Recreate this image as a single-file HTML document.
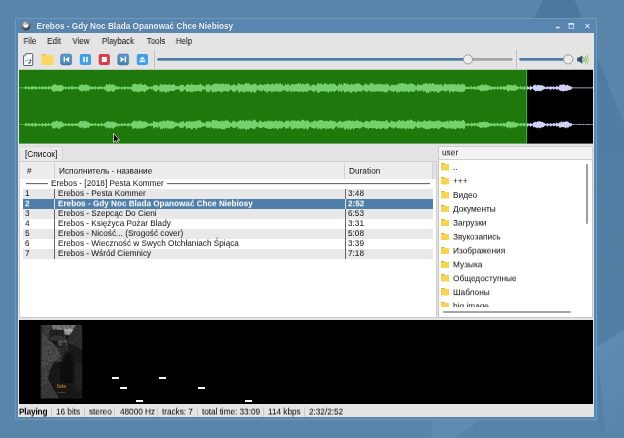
<!DOCTYPE html>
<html><head><meta charset="utf-8">
<style>
*{box-sizing:border-box;margin:0;padding:0}
html,body{width:624px;height:438px;overflow:hidden;background:#5985ab;font-family:"Liberation Sans",sans-serif;font-size:8.2px;color:#0c0c0c}
.abs{position:absolute}
i{display:block;position:absolute;font-style:normal}
#bg{position:absolute;left:0;top:0}
#win{position:absolute;left:15px;top:18px;width:582px;height:402px;background:#5886b0;border:1px solid #7098bd}
#title{position:absolute;left:36px;top:18px;transform:translate(.6px,.6px);text-shadow:0 .7px .8px rgba(25,45,75,.55);height:15px;line-height:15px;color:#eef3f8;font-weight:bold;font-size:8.2px;letter-spacing:.02px;white-space:nowrap}
#body{position:absolute;left:18px;top:33px;width:576px;height:384px;background:#e4e4e4}
.menu{position:absolute;top:35px;font-size:8.3px;line-height:12px;color:#0a0a0a;white-space:nowrap;transform:translateX(-50%) scaleX(.955)}
#wave{position:absolute;left:19px;top:69.7px;width:574px;height:73.8px;background:#000;overflow:hidden}
#played{position:absolute;left:0;top:0;width:508px;height:74px;background:#1e780b}
#tab{position:absolute;left:19px;top:146.3px;width:43.5px;height:15.5px;background:#e9e9e9;border:1px solid #d6d6d6;border-bottom:none;border-radius:2px 2px 0 0;line-height:14.4px;text-align:center;font-size:8.3px;white-space:nowrap}
#pane{position:absolute;left:19px;top:161px;width:418px;height:156.6px;background:#fff;border:1px solid #cfcfcf}
#hdr{position:absolute;left:20px;top:162px;width:416px;height:17.3px;background:#ededed}
.ht{position:absolute;top:162px;transform-origin:0 0;transform:translateY(.37px) scaleY(.94);line-height:18px;white-space:nowrap;font-size:8.3px}
.hs{position:absolute;top:162.5px;width:1px;height:16.5px;background:#d2d2d2}
.row{position:absolute;left:23px;width:409.5px;height:10px;line-height:10px;white-space:nowrap;font-size:8.3px}
.row.odd{background:#e8e8e8}
.row.sel{background:#4f7fa8;color:#fff;font-weight:bold;font-size:8.23px}
.rt{position:absolute;line-height:10px;font-size:8.22px;white-space:nowrap;will-change:transform;transform-origin:0 0;transform:translateY(1.4px) scaleY(.94)}
.rs{color:#fff;font-weight:bold;font-size:8.16px;transform:translateY(1.65px) scaleY(.94)}
.row .v1{left:31px;top:0;width:1px;height:100%;background:#666}
.row .v2{left:321.5px;top:0;width:1px;height:100%;background:#666}
.row.sel .v1,.row.sel .v2{background:#dfe8f0}
#grp{position:absolute;left:51px;top:178px;transform-origin:0 0;transform:translateY(1.35px) scaleY(.94);line-height:10px;white-space:nowrap;font-size:8.22px}
.gl{position:absolute;top:183.3px;height:.8px;background:#555}
#ubox{position:absolute;left:438px;top:146px;width:155px;height:14px;background:#f2f2f2;border:1px solid #cfcfcf;line-height:11px;padding-left:3px;font-size:8.2px}
#browser{position:absolute;left:438px;top:160px;width:155px;height:157.5px;background:#fff;border:1px solid #c4c4c4;border-top:none}
#blist{position:absolute;left:438px;top:161px;width:146px;height:146px;overflow:hidden}
.fo{position:absolute;left:2.9px}
.ft{position:absolute;left:15px;line-height:14px;font-size:8.3px;white-space:nowrap;will-change:transform;transform-origin:0 0}
#vis{position:absolute;left:19px;top:320px;width:574px;height:83.5px;background:#000}
.bar{position:absolute;width:7px;height:2px;background:#f4f4f4}
#status{position:absolute;left:18px;top:403px;width:576px;height:14px;white-space:nowrap}
.st{position:absolute;top:3px;line-height:12px;font-size:8.3px;letter-spacing:-.06px;color:#000;transform-origin:0 0;transform:translateY(-.3px) scaleY(.98)}
.ss{top:4px;width:1px;height:9.5px;background:#c8c8c8}
#title,.menu,.ht,.row span,#grp,#utx,.st,#ttx{will-change:transform}
#tab span,#ubox span{display:inline-block}
#utx{position:absolute;left:441.7px;top:146px;line-height:12px;font-size:8.3px;transform-origin:0 0;transform:translateY(.84px) scaleY(.94)}
#ttx{position:absolute;left:25px;top:146px;line-height:14px;font-size:8.3px;white-space:nowrap;transform:translateY(.75px)}
</style></head><body>
<svg id="bg" width="624" height="438"><defs><linearGradient id="lg1" x1="0" y1="0" x2=".3" y2="1"><stop offset="0" stop-color="#618db3"/><stop offset="1" stop-color="#5985ab"/></linearGradient><linearGradient id="lg2" x1="0" y1="0" x2="0" y2="1"><stop offset="0" stop-color="#4b779e"/><stop offset=".25" stop-color="#517da4"/><stop offset="1" stop-color="#5480a6"/></linearGradient></defs>
<polygon points="543,0 574.5,0 624,124 624,330 597,347 606,438 456,438 482,419 534,419 534,18" fill="url(#lg2)"/>
<polygon points="597,347 624,330 624,438 606,438" fill="url(#lg1)"/>
<polygon points="433,419 482,419 456,438 431,438" fill="#5f8bb1"/>
<polygon points="0,419 433,419 431,438 0,438" fill="#5985ab"/>
<polygon points="482,419 597,419 606,438 456,438" fill="#5783a9"/>
</svg>
<div id="win"></div>
<div id="title">Erebos - Gdy Noc Blada Opanować Chce Niebiosy</div>
<svg class="abs" style="left:553px;top:20px" width="40" height="12" viewBox="0 0 40 12"><rect x="3.1" y="6.8" width="3.5" height="1.5" fill="#e3ebf3"/><rect x="16" y="3.6" width="4.7" height="4.7" fill="none" stroke="#dbe5ef" stroke-width=".75"/><rect x="15.6" y="3.2" width="5.5" height="1.5" fill="#e3ebf3"/><path d="M32.4 4L36.4 8M36.4 4L32.4 8" stroke="#eaf0f6" stroke-width="1.05"/></svg>
<div id="body"></div>
<svg class="abs" style="left:20.5px;top:21px" width="10" height="10" viewBox="0 0 10 10"><defs><radialGradient id="ag" cx=".4" cy=".25" r=".75"><stop offset="0" stop-color="#d8d8d8"/><stop offset=".45" stop-color="#8a8a8a"/><stop offset="1" stop-color="#2a2a2a"/></radialGradient></defs><circle cx="4.9" cy="5" r="4.4" fill="url(#ag)"/><path d="M1.6 4.2Q3 3.2 4.6 4.2Q6 3 7.6 3.4Q7.6 5.2 6.2 6.3Q4.6 7 3.6 6.2Q3 4.8 1.6 4.2Z" fill="#fff"/></svg>
<div class="menu" style="left:29.75px">File</div>
<div class="menu" style="left:54.4px">Edit</div>
<div class="menu" style="left:80.9px">View</div>
<div class="menu" style="left:118.05px">Playback</div>
<div class="menu" style="left:155.65px">Tools</div>
<div class="menu" style="left:184.35px">Help</div>
<svg class="abs" style="left:18px;top:46px" width="140" height="26" viewBox="18 46 140 26"><defs><linearGradient id="sb" x1="0" y1="0" x2="0" y2="1"><stop offset="0" stop-color="#5a9bd2"/><stop offset="1" stop-color="#457fb4"/></linearGradient></defs><g transform="translate(23 53)"><path d="M2.9 .6H9Q9.7 .6 9.7 1.3V11.8Q9.7 12.5 9 12.5H1.3Q.6 12.5 .6 11.8V2.9Z" fill="#fcfcfd" stroke="#425a7a" stroke-width=".95"/><path d="M.6 2.9H2.2Q2.9 2.9 2.9 2.2V.6" fill="#c9d3df" stroke="#425a7a" stroke-width=".6"/><path d="M3.8 6.8L4.4 4.2L5 6.8L5.6 5.4L6 6.8" stroke="#d5d9de" stroke-width=".5" fill="none"/><rect x="2" y="7.2" width="4.8" height="1" fill="#9bd26a"/><path d="M7.3 9.7V6.4L8.2 8" stroke="#2f4665" stroke-width=".8" fill="none"/><ellipse cx="6.3" cy="10" rx="1.1" ry=".8" fill="#2f4665"/></g><g transform="translate(41.5 54)"><path d="M0 1Q0 0 1 0H3.8L4.9 1.3H11Q12 1.3 12 2.3V10Q12 11 11 11H1Q0 11 0 10Z" fill="#fbd75b"/><path d="M0 1Q0 0 1 0H3.8L4.9 1.3H0Z" fill="#e6bd45"/></g><g transform="translate(60.6 54.1)"><rect x="0" y="0" width="11" height="10.8" rx="1.9" fill="url(#sb)" stroke="#3f76aa" stroke-width=".6"/><rect x="3" y="2.6" width="1.4" height="5.6" fill="#fff"/><path d="M8.5 2.6V8.2L4.6 5.4Z" fill="#fff"/></g><g transform="translate(79.8 54.1)"><rect x="0" y="0" width="11.2" height="10.8" rx="1.9" fill="#3c9fe9"/><rect x="3.4" y="2.7" width="1.6" height="5.4" fill="#fff"/><rect x="6.3" y="2.7" width="1.6" height="5.4" fill="#fff"/></g><g transform="translate(98.7 54.1)"><rect x="0" y="0" width="11.2" height="10.8" rx="1.9" fill="#da3b49"/><rect x="3.1" y="2.8" width="5.1" height="5.1" fill="#fff"/></g><g transform="translate(117.8 54.1)"><rect x="0" y="0" width="10.8" height="10.8" rx="1.9" fill="url(#sb)" stroke="#3f76aa" stroke-width=".6"/><rect x="6.8" y="2.6" width="1.4" height="5.6" fill="#fff"/><path d="M2.7 2.6V8.2L6.6 5.4Z" fill="#fff"/></g><g transform="translate(136.8 54.1)"><rect x="0" y="0" width="11.2" height="10.8" rx="1.9" fill="#3c9fe9"/><path d="M5.6 2.3L8.5 5.5H2.7Z" fill="#fff"/><rect x="2.7" y="6.4" width="5.8" height="1.6" fill="#fff"/></g></svg>
<svg class="abs" style="left:150px;top:46px" width="430" height="26" viewBox="150 46 430 26">
<rect x="154.1" y="50" width=".9" height="18.7" fill="#bcbcbc"/>
<rect x="516" y="50" width=".9" height="18.7" fill="#bcbcbc"/>
<rect x="157.2" y="58" width="312" height="2.7" rx="1.35" fill="#4f7fa9"/>
<rect x="466" y="58" width="46.5" height="2.7" rx="1.35" fill="#a6a6a6"/>
<circle cx="467.9" cy="59.35" r="4.6" fill="#ececec" stroke="#8a8a8a" stroke-width=".8"/>
<rect x="519.2" y="58" width="48" height="2.7" rx="1.35" fill="#4f7fa9"/>
<circle cx="568.2" cy="59.3" r="4.6" fill="#ececec" stroke="#8a8a8a" stroke-width=".8"/>
</svg>
<svg class="abs" style="left:577px;top:52.5px" width="14" height="13" viewBox="0 0 14 13"><path d="M0.2 4.6H2L5.4 2.4V10.8L2 8.6H0.2Z" fill="#34506f"/><path d="M6.6 4.6Q8 6.6 6.6 8.6" fill="none" stroke="#5f9f3c" stroke-width="1"/><path d="M8.3 3.1Q10.4 6.6 8.3 10.1" fill="none" stroke="#7cb74a" stroke-width="1"/><path d="M10 1.7Q12.9 6.6 10 11.5" fill="none" stroke="#9acb68" stroke-width="1"/></svg>
<div id="wave">
<svg class="abs" style="left:0;top:0" width="574" height="75" viewBox="0 0 574 75">
<defs><clipPath id="c1"><rect x="0" y="0" width="507.8" height="75"/></clipPath><clipPath id="c2"><rect x="508" y="0" width="67" height="75"/></clipPath></defs>
<rect x="0" y="0" width="507.7" height="75" fill="#1e780b"/>
<g clip-path="url(#c1)" fill="#74d16e"><path id="wv1" d="M0.0 17.6 L0.8 17.6 L1.6 17.6 L2.4 17.6 L3.2 17.6 L4.0 17.6 L4.8 17.6 L5.6 17.6 L6.4 16.2 L7.2 16.3 L8.0 16.9 L8.8 17.4 L9.6 16.3 L10.4 16.7 L11.2 16.9 L12.0 17.4 L12.8 15.7 L13.6 16.3 L14.4 16.5 L15.2 17.1 L16.0 16.2 L16.8 16.5 L17.6 17.0 L18.4 17.2 L19.2 17.3 L20.0 16.6 L20.8 16.6 L21.6 17.3 L22.4 17.3 L23.2 15.8 L24.0 16.8 L24.8 17.1 L25.6 17.2 L26.4 15.5 L27.2 16.7 L28.0 17.2 L28.8 17.4 L29.6 15.7 L30.4 16.2 L31.2 16.9 L32.0 17.3 L32.8 15.6 L33.6 15.2 L34.4 15.3 L35.2 14.3 L36.0 13.9 L36.8 14.8 L37.6 15.3 L38.4 15.2 L39.2 15.3 L40.0 15.2 L40.8 14.8 L41.6 15.3 L42.4 15.1 L43.2 15.1 L44.0 16.3 L44.8 16.6 L45.6 17.1 L46.4 16.5 L47.2 16.9 L48.0 17.1 L48.8 17.4 L49.6 16.3 L50.4 16.2 L51.2 17.1 L52.0 17.2 L52.8 15.6 L53.6 16.3 L54.4 17.1 L55.2 17.4 L56.0 16.4 L56.8 16.7 L57.6 17.1 L58.4 17.4 L59.2 16.4 L60.0 16.8 L60.8 14.6 L61.6 15.1 L62.4 14.9 L63.2 13.8 L64.0 14.7 L64.8 15.2 L65.6 14.9 L66.4 13.9 L67.2 15.3 L68.0 14.6 L68.8 15.0 L69.6 15.5 L70.4 15.5 L71.2 16.6 L72.0 17.4 L72.8 16.2 L73.6 16.8 L74.4 17.0 L75.2 17.2 L76.0 15.8 L76.8 16.8 L77.6 17.2 L78.4 17.4 L79.2 16.4 L80.0 16.2 L80.8 16.8 L81.6 17.1 L82.4 16.3 L83.2 16.7 L84.0 16.9 L84.8 17.2 L85.6 15.8 L86.4 16.8 L87.2 14.1 L88.0 14.1 L88.8 15.1 L89.6 14.9 L90.4 13.5 L91.2 14.8 L92.0 14.1 L92.8 15.2 L93.6 13.7 L94.4 15.2 L95.2 14.0 L96.0 15.7 L96.8 16.3 L97.6 15.8 L98.4 17.3 L99.2 16.3 L100.0 16.4 L100.8 17.3 L101.6 17.4 L102.4 16.4 L103.2 16.9 L104.0 17.2 L104.8 17.3 L105.6 16.2 L106.4 16.6 L107.2 17.1 L108.0 17.3 L108.8 16.4 L109.6 16.8 L110.4 16.9 L111.2 17.4 L112.0 16.0 L112.8 16.7 L113.6 14.8 L114.4 13.7 L115.2 14.2 L116.0 13.3 L116.8 14.1 L117.6 14.3 L118.4 14.4 L119.2 14.4 L120.0 13.9 L120.8 13.2 L121.6 14.2 L122.4 13.5 L123.2 15.0 L124.0 15.0 L124.8 15.0 L125.6 13.6 L126.4 14.9 L127.2 15.0 L128.0 15.5 L128.8 16.4 L129.6 16.6 L130.4 16.7 L131.2 17.3 L132.0 16.0 L132.8 16.7 L133.6 16.8 L134.4 14.8 L135.2 15.5 L136.0 14.7 L136.8 15.5 L137.6 14.3 L138.4 15.5 L139.2 16.6 L140.0 16.5 L140.8 14.5 L141.6 13.5 L142.4 14.9 L143.2 14.2 L144.0 15.0 L144.8 13.9 L145.6 15.0 L146.4 14.0 L147.2 15.0 L148.0 15.0 L148.8 14.4 L149.6 14.2 L150.4 14.8 L151.2 14.3 L152.0 15.0 L152.8 15.0 L153.6 14.7 L154.4 13.7 L155.2 14.3 L156.0 15.2 L156.8 15.9 L157.6 15.9 L158.4 16.3 L159.2 15.9 L160.0 16.6 L160.8 14.9 L161.6 15.1 L162.4 14.5 L163.2 15.2 L164.0 14.5 L164.8 15.1 L165.6 16.6 L166.4 16.6 L167.2 14.8 L168.0 15.0 L168.8 13.4 L169.6 14.7 L170.4 14.7 L171.2 14.9 L172.0 14.8 L172.8 13.1 L173.6 14.8 L174.4 14.7 L175.2 15.1 L176.0 14.4 L176.8 14.9 L177.6 15.1 L178.4 15.0 L179.2 15.0 L180.0 14.7 L180.8 14.1 L181.6 13.7 L182.4 14.5 L183.2 15.7 L184.0 15.6 L184.8 15.7 L185.6 16.7 L186.4 16.5 L187.2 13.9 L188.0 15.1 L188.8 14.5 L189.6 13.7 L190.4 14.3 L191.2 15.3 L192.0 15.9 L192.8 14.7 L193.6 14.8 L194.4 13.9 L195.2 13.7 L196.0 14.1 L196.8 13.2 L197.6 14.0 L198.4 13.6 L199.2 13.4 L200.0 14.8 L200.8 13.4 L201.6 13.4 L202.4 14.1 L203.2 14.1 L204.0 13.3 L204.8 13.7 L205.6 14.7 L206.4 13.4 L207.2 13.9 L208.0 14.8 L208.8 13.6 L209.6 13.6 L210.4 14.5 L211.2 15.4 L212.0 15.3 L212.8 15.5 L213.6 15.2 L214.4 13.7 L215.2 14.6 L216.0 15.0 L216.8 15.0 L217.6 16.0 L218.4 14.8 L219.2 13.2 L220.0 13.0 L220.8 14.6 L221.6 14.1 L222.4 14.8 L223.2 14.2 L224.0 14.7 L224.8 14.4 L225.6 14.8 L226.4 13.1 L227.2 12.8 L228.0 12.9 L228.8 14.3 L229.6 12.6 L230.4 14.3 L231.2 14.5 L232.0 14.8 L232.8 14.5 L233.6 14.5 L234.4 14.0 L235.2 14.3 L236.0 13.0 L236.8 14.2 L237.6 14.4 L238.4 15.6 L239.2 15.9 L240.0 13.9 L240.8 14.9 L241.6 13.4 L242.4 14.5 L243.2 14.9 L244.0 14.7 L244.8 15.3 L245.6 13.9 L246.4 14.7 L247.2 14.6 L248.0 14.0 L248.8 12.9 L249.6 14.2 L250.4 14.6 L251.2 14.4 L252.0 14.6 L252.8 13.9 L253.6 13.4 L254.4 14.2 L255.2 14.3 L256.0 14.8 L256.8 12.7 L257.6 14.0 L258.4 13.0 L259.2 14.5 L260.0 14.3 L260.8 12.8 L261.6 13.0 L262.4 14.8 L263.2 13.5 L264.0 15.1 L264.8 16.0 L265.6 15.8 L266.4 13.3 L267.2 15.1 L268.0 14.4 L268.8 13.4 L269.6 14.1 L270.4 15.6 L271.2 16.0 L272.0 14.6 L272.8 13.7 L273.6 14.7 L274.4 13.7 L275.2 14.7 L276.0 14.0 L276.8 14.3 L277.6 13.8 L278.4 14.5 L279.2 12.7 L280.0 13.0 L280.8 14.6 L281.6 12.7 L282.4 14.4 L283.2 14.0 L284.0 14.2 L284.8 13.6 L285.6 14.6 L286.4 14.4 L287.2 13.6 L288.0 13.2 L288.8 14.0 L289.6 13.2 L290.4 14.6 L291.2 16.2 L292.0 16.3 L292.8 14.5 L293.6 15.0 L294.4 14.1 L295.2 15.1 L296.0 15.0 L296.8 15.1 L297.6 16.0 L298.4 12.9 L299.2 13.4 L300.0 12.8 L300.8 14.6 L301.6 13.4 L302.4 13.6 L303.2 14.3 L304.0 14.7 L304.8 14.5 L305.6 12.7 L306.4 12.7 L307.2 14.4 L308.0 13.2 L308.8 14.8 L309.6 14.3 L310.4 14.6 L311.2 12.9 L312.0 14.2 L312.8 13.3 L313.6 14.8 L314.4 12.9 L315.2 13.4 L316.0 14.7 L316.8 14.2 L317.6 16.1 L318.4 16.3 L319.2 15.2 L320.0 13.4 L320.8 13.4 L321.6 15.0 L322.4 13.3 L323.2 14.7 L324.0 15.7 L324.8 12.8 L325.6 13.2 L326.4 13.2 L327.2 13.8 L328.0 14.4 L328.8 13.3 L329.6 14.6 L330.4 14.6 L331.2 14.8 L332.0 14.4 L332.8 13.0 L333.6 14.5 L334.4 14.8 L335.2 13.5 L336.0 14.6 L336.8 13.7 L337.6 13.4 L338.4 13.6 L339.2 13.1 L340.0 13.9 L340.8 13.4 L341.6 14.6 L342.4 14.9 L343.2 14.9 L344.0 16.0 L344.8 16.1 L345.6 13.7 L346.4 13.2 L347.2 14.5 L348.0 13.7 L348.8 15.2 L349.6 15.1 L350.4 14.8 L351.2 12.8 L352.0 13.0 L352.8 14.5 L353.6 12.8 L354.4 13.8 L355.2 14.6 L356.0 14.7 L356.8 14.5 L357.6 13.7 L358.4 14.8 L359.2 13.6 L360.0 14.4 L360.8 13.2 L361.6 14.8 L362.4 14.3 L363.2 13.7 L364.0 14.7 L364.8 14.2 L365.6 14.4 L366.4 14.4 L367.2 14.4 L368.0 13.0 L368.8 14.6 L369.6 14.6 L370.4 16.2 L371.2 16.2 L372.0 14.7 L372.8 14.6 L373.6 15.2 L374.4 14.2 L375.2 15.1 L376.0 14.7 L376.8 16.0 L377.6 14.0 L378.4 14.7 L379.2 13.2 L380.0 14.6 L380.8 12.8 L381.6 14.1 L382.4 12.8 L383.2 12.9 L384.0 13.2 L384.8 13.3 L385.6 14.3 L386.4 13.1 L387.2 14.6 L388.0 14.0 L388.8 14.7 L389.6 13.5 L390.4 14.8 L391.2 13.4 L392.0 13.1 L392.8 13.8 L393.6 13.7 L394.4 14.2 L395.2 14.4 L396.0 15.1 L396.8 16.2 L397.6 16.2 L398.4 13.9 L399.2 14.6 L400.0 14.5 L400.8 15.1 L401.6 15.1 L402.4 14.5 L403.2 15.4 L404.0 13.4 L404.8 14.0 L405.6 14.0 L406.4 12.8 L407.2 13.1 L408.0 13.4 L408.8 14.6 L409.6 14.1 L410.4 12.9 L411.2 13.3 L412.0 14.8 L412.8 13.4 L413.6 12.9 L414.4 13.2 L415.2 14.0 L416.0 14.6 L416.8 14.0 L417.6 14.8 L418.4 14.7 L419.2 13.6 L420.0 14.7 L420.8 14.7 L421.6 13.9 L422.4 14.1 L423.2 15.6 L424.0 16.5 L424.8 14.2 L425.6 13.8 L426.4 13.2 L427.2 14.7 L428.0 14.6 L428.8 13.9 L429.6 15.0 L430.4 13.7 L431.2 13.8 L432.0 14.4 L432.8 14.8 L433.6 13.7 L434.4 14.0 L435.2 14.7 L436.0 13.7 L436.8 14.8 L437.6 14.7 L438.4 14.6 L439.2 13.8 L440.0 13.7 L440.8 14.7 L441.6 14.6 L442.4 14.8 L443.2 13.0 L444.0 14.3 L444.8 14.8 L445.6 13.9 L446.4 16.4 L447.2 16.8 L448.0 17.3 L448.8 16.4 L449.6 16.6 L450.4 17.2 L451.2 17.4 L452.0 15.3 L452.8 16.7 L453.6 16.9 L454.4 17.1 L455.2 16.1 L456.0 16.7 L456.8 16.7 L457.6 17.4 L458.4 15.5 L459.2 16.0 L460.0 15.9 L460.8 15.4 L461.6 15.3 L462.4 14.6 L463.2 14.6 L464.0 14.9 L464.8 14.4 L465.6 15.4 L466.4 14.0 L467.2 14.2 L468.0 15.4 L468.8 15.0 L469.6 15.5 L470.4 15.7 L471.2 16.8 L472.0 15.9 L472.8 16.4 L473.6 17.1 L474.4 17.2 L475.2 16.1 L476.0 16.4 L476.8 17.1 L477.6 17.4 L478.4 16.3 L479.2 16.7 L480.0 17.0 L480.8 17.4 L481.6 15.6 L482.4 16.2 L483.2 17.1 L484.0 17.3 L484.8 15.4 L485.6 16.6 L486.4 16.5 L487.2 16.3 L488.0 15.5 L488.8 14.3 L489.6 14.7 L490.4 14.7 L491.2 15.5 L492.0 14.5 L492.8 15.3 L493.6 15.6 L494.4 15.3 L495.2 15.2 L496.0 14.1 L496.8 14.9 L497.6 16.3 L498.4 16.1 L499.2 16.7 L500.0 17.0 L500.8 17.1 L501.6 15.6 L502.4 16.8 L503.2 16.8 L504.0 17.4 L504.8 16.0 L505.6 16.7 L506.4 17.0 L507.2 17.3 L508.0 16.1 L508.8 16.2 L509.6 17.0 L510.4 17.4 L511.2 15.6 L512.0 16.2 L512.8 16.9 L513.6 17.1 L514.4 15.2 L515.2 15.6 L516.0 14.1 L516.8 15.2 L517.6 15.4 L518.4 14.9 L519.2 14.5 L520.0 15.2 L520.8 15.5 L521.6 14.7 L522.4 15.6 L523.2 15.1 L524.0 16.3 L524.8 15.6 L525.6 16.8 L526.4 16.9 L527.2 17.4 L528.0 16.3 L528.8 16.5 L529.6 17.1 L530.4 17.0 L531.2 16.3 L532.0 16.7 L532.8 16.6 L533.6 17.1 L534.4 16.2 L535.2 16.7 L536.0 16.9 L536.8 17.3 L537.6 15.6 L538.4 16.2 L539.2 17.0 L540.0 16.2 L540.8 14.4 L541.6 14.8 L542.4 15.1 L543.2 14.5 L544.0 14.4 L544.8 14.3 L545.6 14.7 L546.4 15.3 L547.2 15.5 L548.0 14.4 L548.8 15.0 L549.6 15.7 L550.4 15.8 L551.2 15.9 L552.0 16.8 L552.8 16.9 L553.6 17.6 L554.4 17.6 L555.2 17.6 L556.0 17.5 L556.8 17.6 L557.6 17.6 L558.4 17.6 L559.2 17.5 L560.0 17.6 L560.8 17.6 L561.6 17.6 L562.4 17.6 L563.2 17.6 L564.0 17.6 L564.8 17.6 L565.6 17.6 L566.4 17.6 L567.2 17.6 L568.0 17.5 L568.8 17.6 L569.6 17.6 L570.4 17.6 L571.2 17.5 L572.0 17.6 L572.8 17.6 L573.6 17.6 L574.4 17.5 L574.4 18.3 L573.6 18.3 L572.8 18.3 L572.0 18.2 L571.2 18.3 L570.4 18.3 L569.6 18.2 L568.8 18.3 L568.0 18.2 L567.2 18.3 L566.4 18.2 L565.6 18.3 L564.8 18.2 L564.0 18.2 L563.2 18.2 L562.4 18.3 L561.6 18.3 L560.8 18.3 L560.0 18.3 L559.2 18.2 L558.4 18.3 L557.6 18.3 L556.8 18.2 L556.0 18.2 L555.2 18.3 L554.4 18.2 L553.6 18.3 L552.8 18.7 L552.0 19.4 L551.2 20.3 L550.4 19.7 L549.6 20.2 L548.8 20.3 L548.0 21.2 L547.2 20.7 L546.4 21.1 L545.6 20.7 L544.8 21.2 L544.0 21.2 L543.2 21.6 L542.4 20.4 L541.6 21.3 L540.8 20.5 L540.0 19.9 L539.2 19.1 L538.4 19.5 L537.6 20.0 L536.8 18.7 L536.0 18.7 L535.2 19.2 L534.4 20.1 L533.6 18.5 L532.8 19.1 L532.0 19.3 L531.2 20.5 L530.4 18.7 L529.6 18.7 L528.8 19.1 L528.0 19.6 L527.2 18.4 L526.4 19.0 L525.6 19.1 L524.8 19.5 L524.0 19.8 L523.2 20.4 L522.4 20.6 L521.6 21.3 L520.8 21.5 L520.0 20.5 L519.2 21.1 L518.4 21.3 L517.6 20.7 L516.8 21.6 L516.0 20.8 L515.2 20.2 L514.4 19.6 L513.6 18.4 L512.8 18.9 L512.0 19.4 L511.2 20.4 L510.4 18.7 L509.6 19.0 L508.8 19.4 L508.0 19.6 L507.2 18.8 L506.4 19.1 L505.6 19.4 L504.8 20.3 L504.0 18.6 L503.2 19.1 L502.4 19.1 L501.6 19.5 L500.8 18.4 L500.0 18.6 L499.2 19.4 L498.4 20.1 L497.6 19.8 L496.8 20.5 L496.0 20.7 L495.2 20.5 L494.4 21.2 L493.6 20.4 L492.8 20.7 L492.0 20.4 L491.2 20.3 L490.4 20.5 L489.6 21.5 L488.8 21.4 L488.0 20.2 L487.2 19.6 L486.4 19.4 L485.6 19.9 L484.8 20.6 L484.0 18.7 L483.2 19.0 L482.4 19.7 L481.6 20.1 L480.8 18.4 L480.0 18.7 L479.2 19.8 L478.4 19.5 L477.6 18.8 L476.8 18.9 L476.0 19.2 L475.2 20.1 L474.4 18.7 L473.6 19.0 L472.8 19.7 L472.0 20.0 L471.2 19.6 L470.4 19.4 L469.6 19.8 L468.8 21.2 L468.0 20.4 L467.2 20.2 L466.4 20.4 L465.6 21.1 L464.8 20.9 L464.0 20.7 L463.2 20.5 L462.4 21.5 L461.6 21.3 L460.8 20.2 L460.0 19.8 L459.2 19.4 L458.4 19.9 L457.6 18.7 L456.8 19.1 L456.0 19.9 L455.2 19.7 L454.4 18.4 L453.6 19.0 L452.8 19.5 L452.0 19.5 L451.2 18.6 L450.4 19.0 L449.6 19.1 L448.8 19.8 L448.0 18.7 L447.2 18.9 L446.4 19.2 L445.6 21.4 L444.8 22.1 L444.0 21.3 L443.2 22.5 L442.4 22.1 L441.6 21.1 L440.8 23.0 L440.0 21.7 L439.2 21.2 L438.4 22.0 L437.6 21.4 L436.8 21.4 L436.0 21.0 L435.2 21.2 L434.4 22.9 L433.6 21.6 L432.8 21.1 L432.0 21.0 L431.2 22.2 L430.4 23.1 L429.6 19.9 L428.8 20.6 L428.0 20.8 L427.2 21.9 L426.4 21.5 L425.6 20.9 L424.8 21.1 L424.0 20.3 L423.2 20.7 L422.4 21.0 L421.6 21.3 L420.8 21.8 L420.0 22.5 L419.2 22.9 L418.4 23.0 L417.6 21.1 L416.8 21.4 L416.0 21.3 L415.2 22.9 L414.4 21.1 L413.6 21.3 L412.8 21.1 L412.0 21.4 L411.2 23.0 L410.4 21.1 L409.6 23.1 L408.8 23.1 L408.0 22.6 L407.2 23.2 L406.4 21.1 L405.6 21.5 L404.8 21.0 L404.0 22.5 L403.2 19.8 L402.4 20.6 L401.6 21.2 L400.8 21.2 L400.0 20.7 L399.2 20.8 L398.4 22.0 L397.6 19.4 L396.8 20.2 L396.0 20.7 L395.2 22.0 L394.4 22.0 L393.6 21.4 L392.8 21.9 L392.0 21.1 L391.2 21.0 L390.4 21.9 L389.6 22.9 L388.8 21.2 L388.0 21.5 L387.2 21.5 L386.4 21.1 L385.6 22.7 L384.8 21.2 L384.0 21.1 L383.2 22.1 L382.4 21.5 L381.6 21.0 L380.8 23.1 L380.0 21.1 L379.2 23.1 L378.4 21.7 L377.6 23.0 L376.8 20.0 L376.0 21.3 L375.2 21.6 L374.4 22.3 L373.6 21.4 L372.8 20.8 L372.0 22.3 L371.2 20.0 L370.4 20.6 L369.6 20.3 L368.8 21.0 L368.0 23.2 L367.2 21.6 L366.4 21.9 L365.6 23.0 L364.8 21.3 L364.0 22.3 L363.2 21.0 L362.4 21.9 L361.6 21.0 L360.8 21.9 L360.0 21.2 L359.2 21.2 L358.4 21.4 L357.6 21.2 L356.8 22.0 L356.0 21.2 L355.2 21.5 L354.4 22.1 L353.6 21.1 L352.8 22.5 L352.0 21.6 L351.2 21.5 L350.4 20.4 L349.6 20.8 L348.8 20.9 L348.0 22.4 L347.2 22.1 L346.4 20.7 L345.6 21.7 L344.8 19.4 L344.0 20.7 L343.2 20.4 L342.4 22.5 L341.6 21.2 L340.8 21.2 L340.0 21.5 L339.2 21.3 L338.4 21.1 L337.6 22.7 L336.8 22.2 L336.0 21.6 L335.2 21.6 L334.4 21.8 L333.6 21.0 L332.8 23.2 L332.0 23.1 L331.2 21.9 L330.4 21.0 L329.6 22.4 L328.8 21.0 L328.0 21.5 L327.2 21.4 L326.4 22.5 L325.6 22.4 L324.8 21.1 L324.0 20.2 L323.2 20.9 L322.4 22.5 L321.6 21.3 L320.8 20.6 L320.0 21.6 L319.2 21.9 L318.4 19.4 L317.6 20.2 L316.8 20.9 L316.0 21.0 L315.2 22.9 L314.4 21.3 L313.6 21.0 L312.8 21.0 L312.0 22.6 L311.2 21.0 L310.4 21.5 L309.6 22.9 L308.8 21.7 L308.0 21.6 L307.2 22.6 L306.4 21.2 L305.6 21.1 L304.8 21.4 L304.0 21.0 L303.2 21.4 L302.4 21.5 L301.6 21.0 L300.8 23.0 L300.0 21.4 L299.2 23.2 L298.4 22.8 L297.6 20.1 L296.8 20.6 L296.0 22.5 L295.2 21.1 L294.4 22.5 L293.6 21.2 L292.8 20.8 L292.0 20.2 L291.2 20.3 L290.4 20.2 L289.6 21.0 L288.8 21.2 L288.0 22.4 L287.2 21.2 L286.4 21.6 L285.6 21.0 L284.8 23.0 L284.0 21.3 L283.2 22.2 L282.4 21.0 L281.6 22.3 L280.8 21.2 L280.0 21.7 L279.2 22.1 L278.4 21.7 L277.6 21.0 L276.8 21.2 L276.0 22.0 L275.2 21.0 L274.4 22.3 L273.6 21.3 L272.8 21.3 L272.0 22.9 L271.2 20.7 L270.4 20.3 L269.6 21.9 L268.8 21.8 L268.0 21.7 L267.2 20.7 L266.4 20.9 L265.6 20.1 L264.8 20.5 L264.0 20.0 L263.2 21.3 L262.4 22.3 L261.6 21.0 L260.8 22.7 L260.0 21.6 L259.2 21.2 L258.4 21.2 L257.6 22.1 L256.8 21.1 L256.0 21.3 L255.2 21.4 L254.4 21.8 L253.6 21.6 L252.8 22.8 L252.0 21.3 L251.2 21.0 L250.4 21.0 L249.6 21.1 L248.8 23.2 L248.0 21.2 L247.2 22.9 L246.4 21.1 L245.6 21.5 L244.8 20.0 L244.0 19.9 L243.2 21.9 L242.4 21.0 L241.6 20.7 L240.8 20.6 L240.0 21.6 L239.2 19.6 L238.4 19.5 L237.6 20.6 L236.8 22.3 L236.0 22.6 L235.2 23.1 L234.4 21.2 L233.6 21.3 L232.8 23.0 L232.0 22.7 L231.2 21.0 L230.4 21.6 L229.6 22.0 L228.8 21.5 L228.0 21.3 L227.2 22.3 L226.4 21.1 L225.6 22.4 L224.8 22.7 L224.0 21.4 L223.2 21.3 L222.4 21.7 L221.6 21.0 L220.8 22.9 L220.0 22.3 L219.2 21.8 L218.4 19.8 L217.6 20.3 L216.8 21.5 L216.0 22.4 L215.2 20.9 L214.4 22.5 L213.6 21.2 L212.8 20.2 L212.0 19.6 L211.2 20.0 L210.4 21.2 L209.6 21.3 L208.8 22.3 L208.0 21.3 L207.2 21.0 L206.4 21.3 L205.6 21.3 L204.8 21.0 L204.0 22.1 L203.2 22.2 L202.4 21.5 L201.6 23.1 L200.8 21.2 L200.0 21.3 L199.2 21.3 L198.4 21.0 L197.6 21.8 L196.8 22.4 L196.0 21.0 L195.2 22.2 L194.4 22.1 L193.6 22.7 L192.8 21.5 L192.0 19.8 L191.2 20.5 L190.4 22.3 L189.6 22.1 L188.8 22.1 L188.0 21.4 L187.2 22.1 L186.4 19.1 L185.6 19.7 L184.8 20.0 L184.0 19.3 L183.2 20.0 L182.4 21.7 L181.6 21.8 L180.8 21.5 L180.0 21.0 L179.2 20.7 L178.4 21.3 L177.6 21.0 L176.8 21.5 L176.0 21.5 L175.2 21.2 L174.4 21.2 L173.6 22.7 L172.8 21.6 L172.0 22.7 L171.2 21.4 L170.4 21.4 L169.6 21.0 L168.8 21.9 L168.0 22.3 L167.2 20.9 L166.4 19.8 L165.6 19.2 L164.8 20.6 L164.0 21.2 L163.2 21.6 L162.4 22.0 L161.6 20.9 L160.8 21.6 L160.0 18.9 L159.2 19.1 L158.4 19.8 L157.6 19.6 L156.8 19.8 L156.0 20.3 L155.2 20.9 L154.4 21.1 L153.6 21.1 L152.8 20.9 L152.0 20.9 L151.2 21.0 L150.4 20.8 L149.6 22.6 L148.8 21.1 L148.0 22.4 L147.2 22.4 L146.4 22.2 L145.6 22.6 L144.8 21.3 L144.0 20.8 L143.2 21.9 L142.4 22.6 L141.6 21.0 L140.8 22.5 L140.0 19.2 L139.2 19.8 L138.4 20.5 L137.6 21.9 L136.8 22.0 L136.0 20.9 L135.2 20.6 L134.4 20.8 L133.6 18.7 L132.8 19.2 L132.0 19.6 L131.2 18.6 L130.4 19.0 L129.6 19.2 L128.8 20.3 L128.0 20.4 L127.2 20.0 L126.4 22.0 L125.6 22.5 L124.8 21.9 L124.0 21.0 L123.2 21.3 L122.4 20.8 L121.6 22.6 L120.8 21.0 L120.0 22.4 L119.2 22.6 L118.4 21.5 L117.6 21.9 L116.8 21.5 L116.0 21.3 L115.2 22.1 L114.4 21.5 L113.6 21.0 L112.8 19.4 L112.0 20.2 L111.2 18.5 L110.4 18.8 L109.6 19.2 L108.8 20.1 L108.0 18.4 L107.2 18.6 L106.4 19.2 L105.6 20.2 L104.8 18.7 L104.0 18.7 L103.2 19.5 L102.4 19.5 L101.6 18.5 L100.8 18.5 L100.0 18.9 L99.2 20.0 L98.4 18.7 L97.6 19.6 L96.8 19.5 L96.0 20.4 L95.2 21.1 L94.4 21.9 L93.6 21.9 L92.8 20.6 L92.0 20.6 L91.2 22.3 L90.4 21.0 L89.6 21.9 L88.8 21.8 L88.0 21.1 L87.2 21.4 L86.4 19.5 L85.6 20.2 L84.8 18.5 L84.0 19.1 L83.2 19.1 L82.4 19.5 L81.6 18.4 L80.8 19.0 L80.0 19.2 L79.2 19.9 L78.4 18.4 L77.6 18.5 L76.8 19.2 L76.0 19.9 L75.2 18.6 L74.4 18.9 L73.6 18.9 L72.8 19.9 L72.0 18.6 L71.2 19.3 L70.4 20.1 L69.6 21.1 L68.8 20.2 L68.0 20.6 L67.2 22.3 L66.4 20.6 L65.6 20.8 L64.8 20.6 L64.0 21.1 L63.2 22.4 L62.4 20.6 L61.6 20.9 L60.8 20.5 L60.0 19.7 L59.2 19.6 L58.4 18.4 L57.6 18.6 L56.8 19.0 L56.0 19.4 L55.2 18.5 L54.4 18.7 L53.6 19.5 L52.8 20.0 L52.0 18.4 L51.2 18.7 L50.4 19.3 L49.6 19.7 L48.8 18.5 L48.0 18.5 L47.2 19.1 L46.4 19.3 L45.6 18.4 L44.8 19.7 L44.0 19.7 L43.2 20.8 L42.4 21.4 L41.6 21.0 L40.8 22.0 L40.0 20.7 L39.2 21.8 L38.4 20.6 L37.6 21.1 L36.8 21.5 L36.0 20.8 L35.2 22.4 L34.4 21.6 L33.6 21.0 L32.8 20.4 L32.0 18.5 L31.2 18.8 L30.4 19.1 L29.6 19.8 L28.8 18.5 L28.0 18.7 L27.2 19.4 L26.4 19.3 L25.6 18.4 L24.8 18.9 L24.0 19.2 L23.2 19.8 L22.4 18.4 L21.6 18.7 L20.8 19.0 L20.0 19.3 L19.2 18.4 L18.4 18.5 L17.6 19.1 L16.8 19.8 L16.0 19.6 L15.2 18.4 L14.4 18.8 L13.6 19.3 L12.8 20.6 L12.0 18.4 L11.2 19.1 L10.4 19.1 L9.6 19.8 L8.8 18.5 L8.0 18.8 L7.2 19.0 L6.4 19.5 L5.6 18.2 L4.8 18.2 L4.0 18.2 L3.2 18.2 L2.4 18.2 L1.6 18.2 L0.8 18.2 L0.0 18.2Z"/><path id="wv2" d="M0.0 54.4 L0.8 54.4 L1.6 54.4 L2.4 54.4 L3.2 54.4 L4.0 54.4 L4.8 54.4 L5.6 54.4 L6.4 52.9 L7.2 53.2 L8.0 53.5 L8.8 54.0 L9.6 52.9 L10.4 53.3 L11.2 53.9 L12.0 54.2 L12.8 52.9 L13.6 53.2 L14.4 53.5 L15.2 53.9 L16.0 53.0 L16.8 52.6 L17.6 53.8 L18.4 54.0 L19.2 54.2 L20.0 52.9 L20.8 53.7 L21.6 54.1 L22.4 54.2 L23.2 52.5 L24.0 53.7 L24.8 53.9 L25.6 54.1 L26.4 52.6 L27.2 53.6 L28.0 53.8 L28.8 54.1 L29.6 52.8 L30.4 53.5 L31.2 53.8 L32.0 54.1 L32.8 52.8 L33.6 51.8 L34.4 52.1 L35.2 51.5 L36.0 51.1 L36.8 51.7 L37.6 50.3 L38.4 51.1 L39.2 52.1 L40.0 51.0 L40.8 51.7 L41.6 51.5 L42.4 51.2 L43.2 52.1 L44.0 53.0 L44.8 53.4 L45.6 54.1 L46.4 53.3 L47.2 53.6 L48.0 53.8 L48.8 54.0 L49.6 53.0 L50.4 53.5 L51.2 53.8 L52.0 54.2 L52.8 53.1 L53.6 53.3 L54.4 54.0 L55.2 54.0 L56.0 53.2 L56.8 53.6 L57.6 53.5 L58.4 54.1 L59.2 52.3 L60.0 53.2 L60.8 51.2 L61.6 51.0 L62.4 51.1 L63.2 50.8 L64.0 51.9 L64.8 50.8 L65.6 51.1 L66.4 50.7 L67.2 51.3 L68.0 51.8 L68.8 52.1 L69.6 52.1 L70.4 53.1 L71.2 53.5 L72.0 54.0 L72.8 52.6 L73.6 53.8 L74.4 53.9 L75.2 53.9 L76.0 53.1 L76.8 53.3 L77.6 54.1 L78.4 54.2 L79.2 53.3 L80.0 53.6 L80.8 54.0 L81.6 54.0 L82.4 52.6 L83.2 53.6 L84.0 53.7 L84.8 54.0 L85.6 52.7 L86.4 53.3 L87.2 52.1 L88.0 50.9 L88.8 52.1 L89.6 50.7 L90.4 51.8 L91.2 52.0 L92.0 51.4 L92.8 51.7 L93.6 51.5 L94.4 52.0 L95.2 52.0 L96.0 52.0 L96.8 52.8 L97.6 52.7 L98.4 54.1 L99.2 53.4 L100.0 53.4 L100.8 54.0 L101.6 53.9 L102.4 52.9 L103.2 53.5 L104.0 54.0 L104.8 54.1 L105.6 52.6 L106.4 53.7 L107.2 53.9 L108.0 54.0 L108.8 53.2 L109.6 53.0 L110.4 53.8 L111.2 54.0 L112.0 52.6 L112.8 53.4 L113.6 51.0 L114.4 51.7 L115.2 50.0 L116.0 50.9 L116.8 51.2 L117.6 51.6 L118.4 50.4 L119.2 51.8 L120.0 50.5 L120.8 50.9 L121.6 50.1 L122.4 51.2 L123.2 51.7 L124.0 51.7 L124.8 51.4 L125.6 51.3 L126.4 51.7 L127.2 51.2 L128.0 53.2 L128.8 52.5 L129.6 53.3 L130.4 53.8 L131.2 54.1 L132.0 52.4 L132.8 53.2 L133.6 53.5 L134.4 50.7 L135.2 51.0 L136.0 52.1 L136.8 52.2 L137.6 52.3 L138.4 51.6 L139.2 53.1 L140.0 52.6 L140.8 50.9 L141.6 51.8 L142.4 51.6 L143.2 50.8 L144.0 50.7 L144.8 51.2 L145.6 49.9 L146.4 51.6 L147.2 51.6 L148.0 50.1 L148.8 50.3 L149.6 50.4 L150.4 50.8 L151.2 51.8 L152.0 50.5 L152.8 50.7 L153.6 50.9 L154.4 51.8 L155.2 51.6 L156.0 51.8 L156.8 52.7 L157.6 52.8 L158.4 52.5 L159.2 53.5 L160.0 53.8 L160.8 50.9 L161.6 52.2 L162.4 52.3 L163.2 51.0 L164.0 51.8 L164.8 51.0 L165.6 53.0 L166.4 53.3 L167.2 50.6 L168.0 51.7 L168.8 51.6 L169.6 51.7 L170.4 50.3 L171.2 51.7 L172.0 51.5 L172.8 51.8 L173.6 51.8 L174.4 50.7 L175.2 51.2 L176.0 51.6 L176.8 51.4 L177.6 49.8 L178.4 51.8 L179.2 50.1 L180.0 50.6 L180.8 49.9 L181.6 50.4 L182.4 52.2 L183.2 51.8 L184.0 53.2 L184.8 52.2 L185.6 53.1 L186.4 53.8 L187.2 50.8 L188.0 51.9 L188.8 51.0 L189.6 51.7 L190.4 51.0 L191.2 51.9 L192.0 52.7 L192.8 50.2 L193.6 50.3 L194.4 50.0 L195.2 49.9 L196.0 50.9 L196.8 49.7 L197.6 49.8 L198.4 51.4 L199.2 51.1 L200.0 51.1 L200.8 51.6 L201.6 51.0 L202.4 51.5 L203.2 50.0 L204.0 51.2 L204.8 51.1 L205.6 51.6 L206.4 49.6 L207.2 50.8 L208.0 50.7 L208.8 49.5 L209.6 51.5 L210.4 51.8 L211.2 52.6 L212.0 52.4 L212.8 53.3 L213.6 51.1 L214.4 50.8 L215.2 50.4 L216.0 52.0 L216.8 51.3 L217.6 52.6 L218.4 52.5 L219.2 50.6 L220.0 51.5 L220.8 50.2 L221.6 50.0 L222.4 51.1 L223.2 49.9 L224.0 51.1 L224.8 50.1 L225.6 51.4 L226.4 51.0 L227.2 50.0 L228.0 50.0 L228.8 51.6 L229.6 49.5 L230.4 51.3 L231.2 50.5 L232.0 50.8 L232.8 51.0 L233.6 51.6 L234.4 49.5 L235.2 49.6 L236.0 50.0 L236.8 50.4 L237.6 51.8 L238.4 52.4 L239.2 52.9 L240.0 51.0 L240.8 51.2 L241.6 50.1 L242.4 51.6 L243.2 51.9 L244.0 51.6 L244.8 52.7 L245.6 50.8 L246.4 51.5 L247.2 51.3 L248.0 51.3 L248.8 51.6 L249.6 49.9 L250.4 50.7 L251.2 51.4 L252.0 50.9 L252.8 50.6 L253.6 51.2 L254.4 51.4 L255.2 51.1 L256.0 51.6 L256.8 49.8 L257.6 50.7 L258.4 51.3 L259.2 51.3 L260.0 51.5 L260.8 49.8 L261.6 51.6 L262.4 51.0 L263.2 51.9 L264.0 51.1 L264.8 53.0 L265.6 53.1 L266.4 51.0 L267.2 50.5 L268.0 50.7 L268.8 50.7 L269.6 50.6 L270.4 51.7 L271.2 51.8 L272.0 50.1 L272.8 50.8 L273.6 50.7 L274.4 50.1 L275.2 50.6 L276.0 50.9 L276.8 50.3 L277.6 51.1 L278.4 51.1 L279.2 50.1 L280.0 50.8 L280.8 51.5 L281.6 51.5 L282.4 50.6 L283.2 49.7 L284.0 49.9 L284.8 49.5 L285.6 51.0 L286.4 51.6 L287.2 50.7 L288.0 49.7 L288.8 50.7 L289.6 51.2 L290.4 51.6 L291.2 52.8 L292.0 53.1 L292.8 50.9 L293.6 51.9 L294.4 51.5 L295.2 51.1 L296.0 50.1 L296.8 51.4 L297.6 51.5 L298.4 50.8 L299.2 51.5 L300.0 49.5 L300.8 50.8 L301.6 49.7 L302.4 50.0 L303.2 49.8 L304.0 51.5 L304.8 50.8 L305.6 51.4 L306.4 50.5 L307.2 51.2 L308.0 50.5 L308.8 51.0 L309.6 51.2 L310.4 51.6 L311.2 49.9 L312.0 50.4 L312.8 50.8 L313.6 51.3 L314.4 50.8 L315.2 50.7 L316.0 51.8 L316.8 51.4 L317.6 53.1 L318.4 52.9 L319.2 51.0 L320.0 51.9 L320.8 50.6 L321.6 50.8 L322.4 51.8 L323.2 51.9 L324.0 52.2 L324.8 51.0 L325.6 51.6 L326.4 50.6 L327.2 51.0 L328.0 51.3 L328.8 49.6 L329.6 51.2 L330.4 50.0 L331.2 50.6 L332.0 50.8 L332.8 51.4 L333.6 50.3 L334.4 51.2 L335.2 50.9 L336.0 51.4 L336.8 51.1 L337.6 49.5 L338.4 50.7 L339.2 50.8 L340.0 51.1 L340.8 51.5 L341.6 51.2 L342.4 51.7 L343.2 52.3 L344.0 52.4 L344.8 53.2 L345.6 51.9 L346.4 50.5 L347.2 51.4 L348.0 50.5 L348.8 51.6 L349.6 51.5 L350.4 52.7 L351.2 50.8 L352.0 50.9 L352.8 50.3 L353.6 49.7 L354.4 51.1 L355.2 50.6 L356.0 49.8 L356.8 50.8 L357.6 51.3 L358.4 51.1 L359.2 50.7 L360.0 51.1 L360.8 51.5 L361.6 51.2 L362.4 51.5 L363.2 51.1 L364.0 51.3 L364.8 51.2 L365.6 51.5 L366.4 51.3 L367.2 49.7 L368.0 49.8 L368.8 51.7 L369.6 52.4 L370.4 52.4 L371.2 53.0 L372.0 50.8 L372.8 50.4 L373.6 51.0 L374.4 51.9 L375.2 50.7 L376.0 52.0 L376.8 52.8 L377.6 51.3 L378.4 51.6 L379.2 50.5 L380.0 49.9 L380.8 50.3 L381.6 51.0 L382.4 51.2 L383.2 49.9 L384.0 51.3 L384.8 49.9 L385.6 51.6 L386.4 51.5 L387.2 51.4 L388.0 50.2 L388.8 50.3 L389.6 50.2 L390.4 51.3 L391.2 49.6 L392.0 49.6 L392.8 50.2 L393.6 50.5 L394.4 51.6 L395.2 51.2 L396.0 50.9 L396.8 52.2 L397.6 52.7 L398.4 51.7 L399.2 50.1 L400.0 51.2 L400.8 51.9 L401.6 51.5 L402.4 51.6 L403.2 52.0 L404.0 51.4 L404.8 50.8 L405.6 49.6 L406.4 51.3 L407.2 51.5 L408.0 51.2 L408.8 50.7 L409.6 51.5 L410.4 50.6 L411.2 50.1 L412.0 51.5 L412.8 51.1 L413.6 51.6 L414.4 51.4 L415.2 51.0 L416.0 51.2 L416.8 51.1 L417.6 51.6 L418.4 49.4 L419.2 51.6 L420.0 49.5 L420.8 51.5 L421.6 51.1 L422.4 51.7 L423.2 51.8 L424.0 52.8 L424.8 50.9 L425.6 51.7 L426.4 52.0 L427.2 50.5 L428.0 51.8 L428.8 50.4 L429.6 52.8 L430.4 49.9 L431.2 51.2 L432.0 50.0 L432.8 51.1 L433.6 51.1 L434.4 51.4 L435.2 50.7 L436.0 50.0 L436.8 49.7 L437.6 50.9 L438.4 51.5 L439.2 50.6 L440.0 50.4 L440.8 51.0 L441.6 51.6 L442.4 51.0 L443.2 50.3 L444.0 49.9 L444.8 50.1 L445.6 51.3 L446.4 53.3 L447.2 53.9 L448.0 54.0 L448.8 52.3 L449.6 53.4 L450.4 53.7 L451.2 54.1 L452.0 52.9 L452.8 52.7 L453.6 53.5 L454.4 53.8 L455.2 52.2 L456.0 53.0 L456.8 53.8 L457.6 53.8 L458.4 52.4 L459.2 53.2 L460.0 52.8 L460.8 51.4 L461.6 52.3 L462.4 52.0 L463.2 51.9 L464.0 51.7 L464.8 52.3 L465.6 51.0 L466.4 52.3 L467.2 52.2 L468.0 51.8 L468.8 52.2 L469.6 52.9 L470.4 53.3 L471.2 53.3 L472.0 53.0 L472.8 53.4 L473.6 53.8 L474.4 53.9 L475.2 52.1 L476.0 53.6 L476.8 53.8 L477.6 53.8 L478.4 52.4 L479.2 53.0 L480.0 53.9 L480.8 54.2 L481.6 53.0 L482.4 53.0 L483.2 53.4 L484.0 53.9 L484.8 52.0 L485.6 53.4 L486.4 53.7 L487.2 52.5 L488.0 52.3 L488.8 51.3 L489.6 51.3 L490.4 51.6 L491.2 51.7 L492.0 52.3 L492.8 51.4 L493.6 52.2 L494.4 51.1 L495.2 52.3 L496.0 52.4 L496.8 52.7 L497.6 52.9 L498.4 53.0 L499.2 53.0 L500.0 53.7 L500.8 53.8 L501.6 53.0 L502.4 53.3 L503.2 53.6 L504.0 54.1 L504.8 52.5 L505.6 53.3 L506.4 53.5 L507.2 53.9 L508.0 53.1 L508.8 53.4 L509.6 53.6 L510.4 54.2 L511.2 52.7 L512.0 53.2 L512.8 53.8 L513.6 54.1 L514.4 52.6 L515.2 52.6 L516.0 51.5 L516.8 52.1 L517.6 52.2 L518.4 51.7 L519.2 50.7 L520.0 51.7 L520.8 51.0 L521.6 51.5 L522.4 52.1 L523.2 51.8 L524.0 52.1 L524.8 53.1 L525.6 53.1 L526.4 53.8 L527.2 54.0 L528.0 53.2 L528.8 53.4 L529.6 53.8 L530.4 54.1 L531.2 52.9 L532.0 53.5 L532.8 53.7 L533.6 54.0 L534.4 53.0 L535.2 53.3 L536.0 53.5 L536.8 53.8 L537.6 52.0 L538.4 53.4 L539.2 53.5 L540.0 53.1 L540.8 52.1 L541.6 52.4 L542.4 50.9 L543.2 52.2 L544.0 52.3 L544.8 51.4 L545.6 52.0 L546.4 51.6 L547.2 51.5 L548.0 51.3 L548.8 51.8 L549.6 51.9 L550.4 52.9 L551.2 53.2 L552.0 53.0 L552.8 53.6 L553.6 54.4 L554.4 54.3 L555.2 54.3 L556.0 54.4 L556.8 54.4 L557.6 54.4 L558.4 54.4 L559.2 54.4 L560.0 54.3 L560.8 54.3 L561.6 54.3 L562.4 54.4 L563.2 54.4 L564.0 54.3 L564.8 54.3 L565.6 54.4 L566.4 54.4 L567.2 54.4 L568.0 54.3 L568.8 54.3 L569.6 54.3 L570.4 54.3 L571.2 54.4 L572.0 54.4 L572.8 54.4 L573.6 54.4 L574.4 54.3 L574.4 55.0 L573.6 55.1 L572.8 55.0 L572.0 55.1 L571.2 55.0 L570.4 55.1 L569.6 55.0 L568.8 55.1 L568.0 55.0 L567.2 55.0 L566.4 55.1 L565.6 55.0 L564.8 55.0 L564.0 55.0 L563.2 55.0 L562.4 55.0 L561.6 55.1 L560.8 55.0 L560.0 55.0 L559.2 55.0 L558.4 55.0 L557.6 55.0 L556.8 55.1 L556.0 55.0 L555.2 55.0 L554.4 55.0 L553.6 55.1 L552.8 55.4 L552.0 56.2 L551.2 56.6 L550.4 56.3 L549.6 57.7 L548.8 56.9 L548.0 58.6 L547.2 57.2 L546.4 58.4 L545.6 57.2 L544.8 57.2 L544.0 57.3 L543.2 57.0 L542.4 57.3 L541.6 57.6 L540.8 58.1 L540.0 56.8 L539.2 56.2 L538.4 56.0 L537.6 56.9 L536.8 55.3 L536.0 55.8 L535.2 56.1 L534.4 56.3 L533.6 55.3 L532.8 55.7 L532.0 56.6 L531.2 56.3 L530.4 55.3 L529.6 55.6 L528.8 56.6 L528.0 56.4 L527.2 55.3 L526.4 55.5 L525.6 56.1 L524.8 56.9 L524.0 56.9 L523.2 57.7 L522.4 57.2 L521.6 57.9 L520.8 58.2 L520.0 58.2 L519.2 57.0 L518.4 58.6 L517.6 57.7 L516.8 57.6 L516.0 57.3 L515.2 56.9 L514.4 57.6 L513.6 55.2 L512.8 55.9 L512.0 56.2 L511.2 56.9 L510.4 55.3 L509.6 55.5 L508.8 56.7 L508.0 56.5 L507.2 55.4 L506.4 55.6 L505.6 55.9 L504.8 56.5 L504.0 55.5 L503.2 55.4 L502.4 56.5 L501.6 56.3 L500.8 55.2 L500.0 55.7 L499.2 56.1 L498.4 56.2 L497.6 57.0 L496.8 57.2 L496.0 58.1 L495.2 57.0 L494.4 57.8 L493.6 57.5 L492.8 57.2 L492.0 58.5 L491.2 58.2 L490.4 57.1 L489.6 57.0 L488.8 58.6 L488.0 57.4 L487.2 57.1 L486.4 56.0 L485.6 56.6 L484.8 57.3 L484.0 55.4 L483.2 55.8 L482.4 56.2 L481.6 56.5 L480.8 55.4 L480.0 55.6 L479.2 55.9 L478.4 56.3 L477.6 55.4 L476.8 55.5 L476.0 56.4 L475.2 56.9 L474.4 55.2 L473.6 55.7 L472.8 56.4 L472.0 56.2 L471.2 55.8 L470.4 56.4 L469.6 56.9 L468.8 57.3 L468.0 57.2 L467.2 57.1 L466.4 58.4 L465.6 57.7 L464.8 57.1 L464.0 57.4 L463.2 57.7 L462.4 57.8 L461.6 57.9 L460.8 57.5 L460.0 56.7 L459.2 56.7 L458.4 56.5 L457.6 55.3 L456.8 55.8 L456.0 56.3 L455.2 56.3 L454.4 55.4 L453.6 56.0 L452.8 56.6 L452.0 56.6 L451.2 55.2 L450.4 55.5 L449.6 56.1 L448.8 56.3 L448.0 55.5 L447.2 55.5 L446.4 56.0 L445.6 59.0 L444.8 58.4 L444.0 59.5 L443.2 57.8 L442.4 58.0 L441.6 57.8 L440.8 59.9 L440.0 57.9 L439.2 57.8 L438.4 58.1 L437.6 58.6 L436.8 59.8 L436.0 59.1 L435.2 58.9 L434.4 57.8 L433.6 59.5 L432.8 58.7 L432.0 58.2 L431.2 58.0 L430.4 59.2 L429.6 57.5 L428.8 59.2 L428.0 58.4 L427.2 57.7 L426.4 58.8 L425.6 57.5 L424.8 57.7 L424.0 57.0 L423.2 57.1 L422.4 57.1 L421.6 57.8 L420.8 58.5 L420.0 58.7 L419.2 59.1 L418.4 59.2 L417.6 57.8 L416.8 57.9 L416.0 58.5 L415.2 57.9 L414.4 59.1 L413.6 58.1 L412.8 58.0 L412.0 58.1 L411.2 59.5 L410.4 58.5 L409.6 59.0 L408.8 59.3 L408.0 59.4 L407.2 58.7 L406.4 59.6 L405.6 58.2 L404.8 58.4 L404.0 58.0 L403.2 57.3 L402.4 57.5 L401.6 57.6 L400.8 57.8 L400.0 57.7 L399.2 58.4 L398.4 58.2 L397.6 56.8 L396.8 56.4 L396.0 57.1 L395.2 58.4 L394.4 59.1 L393.6 58.5 L392.8 59.5 L392.0 59.1 L391.2 58.4 L390.4 57.8 L389.6 59.5 L388.8 58.3 L388.0 57.8 L387.2 59.7 L386.4 59.3 L385.6 58.0 L384.8 58.8 L384.0 57.8 L383.2 59.3 L382.4 57.8 L381.6 59.0 L380.8 58.1 L380.0 58.7 L379.2 57.9 L378.4 58.2 L377.6 58.3 L376.8 56.7 L376.0 57.4 L375.2 58.6 L374.4 59.1 L373.6 57.6 L372.8 57.8 L372.0 57.7 L371.2 56.6 L370.4 56.6 L369.6 57.9 L368.8 57.9 L368.0 59.6 L367.2 59.3 L366.4 58.3 L365.6 59.1 L364.8 58.0 L364.0 57.8 L363.2 58.6 L362.4 58.7 L361.6 59.0 L360.8 59.5 L360.0 57.8 L359.2 58.2 L358.4 59.0 L357.6 59.3 L356.8 58.7 L356.0 57.9 L355.2 58.0 L354.4 58.0 L353.6 58.8 L352.8 58.1 L352.0 57.9 L351.2 58.0 L350.4 57.8 L349.6 59.3 L348.8 58.6 L348.0 57.6 L347.2 58.9 L346.4 57.5 L345.6 57.7 L344.8 56.7 L344.0 56.6 L343.2 57.0 L342.4 57.9 L341.6 58.0 L340.8 59.4 L340.0 57.8 L339.2 58.3 L338.4 57.9 L337.6 58.1 L336.8 58.0 L336.0 57.9 L335.2 59.3 L334.4 59.6 L333.6 58.0 L332.8 58.3 L332.0 59.8 L331.2 59.9 L330.4 58.1 L329.6 59.7 L328.8 59.5 L328.0 57.8 L327.2 58.9 L326.4 59.9 L325.6 59.6 L324.8 58.3 L324.0 56.8 L323.2 59.1 L322.4 57.7 L321.6 57.8 L320.8 57.8 L320.0 57.4 L319.2 58.9 L318.4 56.8 L317.6 56.4 L316.8 57.0 L316.0 57.6 L315.2 58.4 L314.4 60.0 L313.6 58.9 L312.8 58.7 L312.0 58.0 L311.2 58.8 L310.4 58.1 L309.6 59.1 L308.8 59.3 L308.0 57.8 L307.2 60.0 L306.4 58.8 L305.6 57.9 L304.8 58.6 L304.0 58.1 L303.2 58.4 L302.4 60.0 L301.6 59.0 L300.8 57.9 L300.0 59.4 L299.2 58.2 L298.4 59.4 L297.6 56.8 L296.8 58.4 L296.0 58.1 L295.2 59.1 L294.4 58.3 L293.6 57.9 L292.8 58.2 L292.0 57.0 L291.2 56.8 L290.4 57.3 L289.6 58.2 L288.8 60.0 L288.0 59.3 L287.2 58.6 L286.4 57.8 L285.6 59.7 L284.8 58.0 L284.0 59.5 L283.2 58.2 L282.4 57.8 L281.6 58.7 L280.8 58.1 L280.0 58.4 L279.2 59.5 L278.4 58.2 L277.6 58.7 L276.8 58.1 L276.0 58.5 L275.2 58.3 L274.4 59.6 L273.6 58.4 L272.8 59.9 L272.0 58.8 L271.2 56.6 L270.4 56.6 L269.6 58.6 L268.8 58.1 L268.0 58.7 L267.2 58.2 L266.4 59.0 L265.6 56.7 L264.8 56.5 L264.0 57.8 L263.2 57.6 L262.4 59.2 L261.6 58.3 L260.8 58.4 L260.0 57.8 L259.2 59.3 L258.4 60.0 L257.6 58.5 L256.8 58.0 L256.0 58.2 L255.2 58.8 L254.4 58.6 L253.6 58.0 L252.8 58.5 L252.0 58.7 L251.2 59.1 L250.4 58.9 L249.6 58.8 L248.8 58.7 L248.0 58.0 L247.2 58.4 L246.4 57.9 L245.6 57.9 L244.8 57.0 L244.0 57.1 L243.2 58.3 L242.4 58.5 L241.6 57.7 L240.8 58.0 L240.0 57.7 L239.2 57.0 L238.4 56.5 L237.6 57.0 L236.8 57.4 L236.0 59.6 L235.2 58.9 L234.4 59.3 L233.6 57.9 L232.8 58.6 L232.0 57.8 L231.2 58.3 L230.4 58.4 L229.6 59.8 L228.8 58.6 L228.0 59.5 L227.2 59.7 L226.4 59.9 L225.6 58.2 L224.8 58.2 L224.0 59.8 L223.2 58.6 L222.4 58.4 L221.6 59.8 L220.8 57.9 L220.0 58.7 L219.2 59.6 L218.4 56.6 L217.6 56.6 L216.8 58.1 L216.0 57.5 L215.2 58.6 L214.4 57.5 L213.6 58.2 L212.8 56.6 L212.0 56.4 L211.2 56.8 L210.4 58.8 L209.6 57.8 L208.8 58.0 L208.0 57.8 L207.2 58.6 L206.4 58.5 L205.6 59.6 L204.8 59.2 L204.0 59.1 L203.2 59.6 L202.4 59.1 L201.6 58.6 L200.8 58.6 L200.0 58.8 L199.2 57.9 L198.4 59.5 L197.6 58.1 L196.8 58.5 L196.0 57.8 L195.2 59.6 L194.4 58.2 L193.6 57.8 L192.8 58.4 L192.0 56.6 L191.2 57.2 L190.4 58.6 L189.6 57.6 L188.8 58.1 L188.0 57.5 L187.2 57.6 L186.4 56.0 L185.6 55.9 L184.8 56.3 L184.0 56.4 L183.2 57.1 L182.4 57.1 L181.6 58.0 L180.8 57.5 L180.0 57.9 L179.2 57.6 L178.4 57.9 L177.6 59.4 L176.8 59.6 L176.0 57.7 L175.2 57.9 L174.4 57.7 L173.6 59.3 L172.8 59.5 L172.0 59.3 L171.2 58.3 L170.4 57.9 L169.6 57.8 L168.8 58.1 L168.0 59.2 L167.2 58.4 L166.4 56.0 L165.6 56.0 L164.8 57.6 L164.0 57.4 L163.2 57.9 L162.4 58.6 L161.6 57.6 L160.8 58.5 L160.0 56.1 L159.2 56.7 L158.4 56.3 L157.6 56.0 L156.8 56.6 L156.0 57.2 L155.2 57.6 L154.4 57.9 L153.6 58.9 L152.8 57.9 L152.0 59.4 L151.2 57.7 L150.4 59.6 L149.6 58.8 L148.8 57.6 L148.0 59.3 L147.2 58.0 L146.4 57.6 L145.6 59.6 L144.8 57.7 L144.0 58.0 L143.2 59.5 L142.4 58.4 L141.6 59.5 L140.8 58.1 L140.0 56.0 L139.2 56.8 L138.4 58.5 L137.6 57.1 L136.8 57.2 L136.0 57.1 L135.2 58.7 L134.4 58.2 L133.6 55.6 L132.8 55.9 L132.0 56.5 L131.2 55.7 L130.4 55.4 L129.6 55.9 L128.8 56.2 L128.0 56.7 L127.2 57.1 L126.4 57.6 L125.6 58.3 L124.8 58.4 L124.0 58.8 L123.2 57.7 L122.4 58.5 L121.6 58.3 L120.8 59.3 L120.0 57.8 L119.2 59.0 L118.4 58.2 L117.6 58.9 L116.8 57.7 L116.0 58.7 L115.2 57.8 L114.4 58.9 L113.6 59.0 L112.8 55.8 L112.0 57.1 L111.2 55.4 L110.4 55.5 L109.6 56.4 L108.8 57.0 L108.0 55.4 L107.2 55.6 L106.4 55.8 L105.6 56.3 L104.8 55.4 L104.0 55.6 L103.2 56.3 L102.4 56.2 L101.6 55.4 L100.8 55.5 L100.0 56.2 L99.2 56.9 L98.4 55.2 L97.6 56.5 L96.8 57.1 L96.0 57.0 L95.2 57.9 L94.4 58.7 L93.6 58.4 L92.8 58.1 L92.0 57.3 L91.2 58.8 L90.4 58.5 L89.6 57.4 L88.8 58.3 L88.0 57.3 L87.2 58.7 L86.4 56.6 L85.6 56.8 L84.8 55.2 L84.0 55.8 L83.2 56.3 L82.4 56.2 L81.6 55.2 L80.8 55.4 L80.0 56.3 L79.2 57.1 L78.4 55.4 L77.6 55.3 L76.8 55.8 L76.0 56.1 L75.2 55.3 L74.4 55.7 L73.6 55.8 L72.8 56.3 L72.0 55.3 L71.2 55.9 L70.4 56.7 L69.6 57.9 L68.8 57.4 L68.0 57.8 L67.2 57.6 L66.4 58.6 L65.6 57.7 L64.8 59.0 L64.0 57.3 L63.2 57.4 L62.4 57.9 L61.6 57.5 L60.8 58.0 L60.0 56.2 L59.2 56.7 L58.4 55.4 L57.6 55.7 L56.8 55.8 L56.0 56.3 L55.2 55.3 L54.4 55.7 L53.6 56.3 L52.8 56.6 L52.0 55.2 L51.2 55.6 L50.4 56.4 L49.6 56.2 L48.8 55.3 L48.0 55.3 L47.2 55.9 L46.4 56.3 L45.6 55.4 L44.8 56.1 L44.0 57.0 L43.2 57.2 L42.4 56.9 L41.6 57.8 L40.8 59.1 L40.0 59.0 L39.2 58.2 L38.4 58.3 L37.6 57.3 L36.8 57.8 L36.0 58.8 L35.2 58.1 L34.4 58.8 L33.6 58.2 L32.8 56.6 L32.0 55.2 L31.2 55.4 L30.4 55.8 L29.6 56.3 L28.8 55.4 L28.0 55.7 L27.2 56.2 L26.4 56.9 L25.6 55.4 L24.8 55.6 L24.0 56.3 L23.2 56.8 L22.4 55.2 L21.6 55.6 L20.8 55.7 L20.0 56.1 L19.2 55.5 L18.4 55.2 L17.6 56.1 L16.8 56.6 L16.0 57.2 L15.2 55.5 L14.4 55.7 L13.6 56.4 L12.8 56.7 L12.0 55.2 L11.2 55.9 L10.4 55.9 L9.6 56.4 L8.8 55.2 L8.0 55.6 L7.2 55.9 L6.4 56.4 L5.6 55.0 L4.8 55.0 L4.0 55.0 L3.2 55.0 L2.4 55.0 L1.6 55.0 L0.8 55.0 L0.0 55.0Z"/></g>
<g clip-path="url(#c2)" fill="#cfd2f6"><use href="#wv1"/><use href="#wv2"/></g>

<rect x="507.1" y="0" width="1" height="75" fill="#2fbf2f"/>
</svg></div>
<svg class="abs" style="left:112px;top:132px" width="10" height="14" viewBox="-1.5 -1.4 10 14"><path d="M0 0V9L2 7.2L3.6 10.6L5 10L3.5 6.7H6.2Z" fill="#0a0a0a" stroke="#f2f2f2" stroke-width=".7" stroke-linejoin="round"/></svg>
<i style="left:19px;top:69px;width:508px;height:1px;background:#bccfb9"></i><i style="left:527px;top:69px;width:66px;height:1px;background:#b6b6b6"></i><i style="left:19px;top:143px;width:508px;height:1px;background:#6da362"></i><i style="left:527px;top:143px;width:66px;height:1px;background:#5b5b5b"></i>
<div id="tab"></div><span id="ttx">[Список]</span>
<div id="pane"></div>
<div id="hdr"></div>
<span class="ht" style="left:26.5px">#</span><span class="ht" style="left:59px">Исполнитель - название</span><span class="ht" style="left:349px">Duration</span>
<i style="left:432px;top:162px;width:4px;height:17px;background:#e1e1e1"></i><i class="hs" style="left:54px"></i><i class="hs" style="left:344px"></i><i class="hs" style="left:431.5px"></i>
<svg class="abs" style="left:20px;top:180px" width="415" height="8" viewBox="20 180 415 8"><rect x="26" y="183.3" width="22" height=".8" fill="#333"/><rect x="167" y="183.3" width="263" height=".8" fill="#333"/></svg>
<div id="grp">Erebos - [2018] Pesta Kommer</div>
<div class="row odd" style="top:188.80px"><i class="v1"></i><i class="v2"></i></div>
<span class="rt" style="left:25px;top:188px">1</span><span class="rt" style="left:57.5px;top:188px">Erebos - Pesta Kommer</span><span class="rt" style="left:348px;top:188px">3:48</span>
<div class="row sel" style="top:198.80px"><i class="v1"></i><i class="v2"></i></div>
<span class="rt rs" style="left:25px;top:198px">2</span><span class="rt rs" style="left:57.5px;top:198px">Erebos - Gdy Noc Blada Opanować Chce Niebiosy</span><span class="rt rs" style="left:348px;top:198px">2:52</span>
<div class="row odd" style="top:208.80px"><i class="v1"></i><i class="v2"></i></div>
<span class="rt" style="left:25px;top:208px">3</span><span class="rt" style="left:57.5px;top:208px">Erebos - Szepcąc Do Cieni</span><span class="rt" style="left:348px;top:208px">6:53</span>
<div class="row" style="top:218.80px"><i class="v1"></i><i class="v2"></i></div>
<span class="rt" style="left:25px;top:218px">4</span><span class="rt" style="left:57.5px;top:218px">Erebos - Księżyca Pożar Blady</span><span class="rt" style="left:348px;top:218px">3:31</span>
<div class="row odd" style="top:228.80px"><i class="v1"></i><i class="v2"></i></div>
<span class="rt" style="left:25px;top:228px">5</span><span class="rt" style="left:57.5px;top:228px">Erebos - Nicość... (Srogość cover)</span><span class="rt" style="left:348px;top:228px">5:08</span>
<div class="row" style="top:238.80px"><i class="v1"></i><i class="v2"></i></div>
<span class="rt" style="left:25px;top:238px">6</span><span class="rt" style="left:57.5px;top:238px">Erebos - Wieczność w Swych Otchłaniach Śpiąca</span><span class="rt" style="left:348px;top:238px">3:39</span>
<div class="row odd" style="top:248.80px"><i class="v1"></i><i class="v2"></i></div>
<span class="rt" style="left:25px;top:248px">7</span><span class="rt" style="left:57.5px;top:248px">Erebos - Wśród Ciemnicy</span><span class="rt" style="left:348px;top:248px">7:18</span>

<div id="ubox"></div><span id="utx">user</span>
<div id="browser"></div>
<div id="blist"><svg class="fo" style="top:2.25px" viewBox="0 0 8.5 7.5" width="8.5" height="7.5"><path d="M0 0.8Q0 0 .8 0H3L3.9 1H7.7Q8.5 1 8.5 1.8V6.7Q8.5 7.5 7.7 7.5H.8Q0 7.5 0 6.7Z" fill="#f9d450"/><path d="M0 .8Q0 0 .8 0H3L3.9 1H0Z" fill="#dfae36"/></svg><span class="ft" style="top:-1px;transform:translateY(0.60px) scaleY(.94)">..</span>
<svg class="fo" style="top:16.15px" viewBox="0 0 8.5 7.5" width="8.5" height="7.5"><path d="M0 0.8Q0 0 .8 0H3L3.9 1H7.7Q8.5 1 8.5 1.8V6.7Q8.5 7.5 7.7 7.5H.8Q0 7.5 0 6.7Z" fill="#f9d450"/><path d="M0 .8Q0 0 .8 0H3L3.9 1H0Z" fill="#dfae36"/></svg><span class="ft" style="top:13px;transform:translateY(0.50px) scaleY(.94)">+++</span>
<svg class="fo" style="top:30.05px" viewBox="0 0 8.5 7.5" width="8.5" height="7.5"><path d="M0 0.8Q0 0 .8 0H3L3.9 1H7.7Q8.5 1 8.5 1.8V6.7Q8.5 7.5 7.7 7.5H.8Q0 7.5 0 6.7Z" fill="#f9d450"/><path d="M0 .8Q0 0 .8 0H3L3.9 1H0Z" fill="#dfae36"/></svg><span class="ft" style="top:27px;transform:translateY(0.40px) scaleY(.94)">Видео</span>
<svg class="fo" style="top:43.95px" viewBox="0 0 8.5 7.5" width="8.5" height="7.5"><path d="M0 0.8Q0 0 .8 0H3L3.9 1H7.7Q8.5 1 8.5 1.8V6.7Q8.5 7.5 7.7 7.5H.8Q0 7.5 0 6.7Z" fill="#f9d450"/><path d="M0 .8Q0 0 .8 0H3L3.9 1H0Z" fill="#dfae36"/></svg><span class="ft" style="top:41px;transform:translateY(0.30px) scaleY(.94)">Документы</span>
<svg class="fo" style="top:57.85px" viewBox="0 0 8.5 7.5" width="8.5" height="7.5"><path d="M0 0.8Q0 0 .8 0H3L3.9 1H7.7Q8.5 1 8.5 1.8V6.7Q8.5 7.5 7.7 7.5H.8Q0 7.5 0 6.7Z" fill="#f9d450"/><path d="M0 .8Q0 0 .8 0H3L3.9 1H0Z" fill="#dfae36"/></svg><span class="ft" style="top:55px;transform:translateY(0.20px) scaleY(.94)">Загрузки</span>
<svg class="fo" style="top:71.75px" viewBox="0 0 8.5 7.5" width="8.5" height="7.5"><path d="M0 0.8Q0 0 .8 0H3L3.9 1H7.7Q8.5 1 8.5 1.8V6.7Q8.5 7.5 7.7 7.5H.8Q0 7.5 0 6.7Z" fill="#f9d450"/><path d="M0 .8Q0 0 .8 0H3L3.9 1H0Z" fill="#dfae36"/></svg><span class="ft" style="top:69px;transform:translateY(0.10px) scaleY(.94)">Звукозапись</span>
<svg class="fo" style="top:85.65px" viewBox="0 0 8.5 7.5" width="8.5" height="7.5"><path d="M0 0.8Q0 0 .8 0H3L3.9 1H7.7Q8.5 1 8.5 1.8V6.7Q8.5 7.5 7.7 7.5H.8Q0 7.5 0 6.7Z" fill="#f9d450"/><path d="M0 .8Q0 0 .8 0H3L3.9 1H0Z" fill="#dfae36"/></svg><span class="ft" style="top:83px;transform:translateY(0.00px) scaleY(.94)">Изображения</span>
<svg class="fo" style="top:99.55px" viewBox="0 0 8.5 7.5" width="8.5" height="7.5"><path d="M0 0.8Q0 0 .8 0H3L3.9 1H7.7Q8.5 1 8.5 1.8V6.7Q8.5 7.5 7.7 7.5H.8Q0 7.5 0 6.7Z" fill="#f9d450"/><path d="M0 .8Q0 0 .8 0H3L3.9 1H0Z" fill="#dfae36"/></svg><span class="ft" style="top:96px;transform:translateY(0.90px) scaleY(.94)">Музыка</span>
<svg class="fo" style="top:113.45px" viewBox="0 0 8.5 7.5" width="8.5" height="7.5"><path d="M0 0.8Q0 0 .8 0H3L3.9 1H7.7Q8.5 1 8.5 1.8V6.7Q8.5 7.5 7.7 7.5H.8Q0 7.5 0 6.7Z" fill="#f9d450"/><path d="M0 .8Q0 0 .8 0H3L3.9 1H0Z" fill="#dfae36"/></svg><span class="ft" style="top:110px;transform:translateY(0.80px) scaleY(.94)">Общедоступные</span>
<svg class="fo" style="top:127.35px" viewBox="0 0 8.5 7.5" width="8.5" height="7.5"><path d="M0 0.8Q0 0 .8 0H3L3.9 1H7.7Q8.5 1 8.5 1.8V6.7Q8.5 7.5 7.7 7.5H.8Q0 7.5 0 6.7Z" fill="#f9d450"/><path d="M0 .8Q0 0 .8 0H3L3.9 1H0Z" fill="#dfae36"/></svg><span class="ft" style="top:124px;transform:translateY(0.70px) scaleY(.94)">Шаблоны</span>
<svg class="fo" style="top:141.25px" viewBox="0 0 8.5 7.5" width="8.5" height="7.5"><path d="M0 0.8Q0 0 .8 0H3L3.9 1H7.7Q8.5 1 8.5 1.8V6.7Q8.5 7.5 7.7 7.5H.8Q0 7.5 0 6.7Z" fill="#f9d450"/><path d="M0 .8Q0 0 .8 0H3L3.9 1H0Z" fill="#dfae36"/></svg><span class="ft" style="top:138px;transform:translateY(0.60px) scaleY(.94)">big image</span>
</div>
<i style="left:586px;top:164px;width:2px;height:60px;background:#9e9e9e;border-radius:1px"></i>
<i style="left:443px;top:311px;width:127.5px;height:2px;background:#a6a6a6;border-radius:1px"></i>
<div id="vis"><svg class="abs" style="left:19px;top:2px" width="70" height="80" viewBox="38 322 70 80"><defs><filter id="bl" x="-5%" y="-5%" width="110%" height="110%"><feGaussianBlur stdDeviation="0.4"/></filter><filter id="bl2" x="-20%" y="-20%" width="140%" height="140%"><feGaussianBlur stdDeviation="0.9"/></filter><filter id="nz" x="0" y="0" width="100%" height="100%"><feTurbulence type="fractalNoise" baseFrequency="0.5" numOctaves="2" seed="5"/><feColorMatrix type="matrix" values="0 0 0 0 0  0 0 0 0 0  0 0 0 0 0  2.2 0 0 0 -0.85"/></filter><clipPath id="ac"><rect x="40.6" y="324.9" width="41.6" height="73.5"/></clipPath></defs>
<rect x="40.6" y="324.9" width="41.6" height="73.5" fill="#1a1a1a"/>
<g clip-path="url(#ac)"><g filter="url(#bl)"><polygon points="40.6,324.7 51.5,324.7 52.0,329.3 49.3,331.1 49.3,339.4 58.9,347.6 66.2,352.2 62.5,362.0 54.3,361.8 50.6,369.1 47.9,378.3 54.3,390.2 59.8,398.8 40.1,398.8" fill="#3f3f3f"/><polygon points="42.9,333.0 48.8,340.3 57.0,348.5 60.7,356.7 54.3,362.0 47.0,365.5 46.1,373.7 42.4,374.6 41.5,349.4" fill="#505050"/><polygon points="41.5,363.7 47.4,365.5 47.9,376.5 46.1,385.6 41.9,384.7" fill="#484848"/><polygon points="40.4,324.7 42.2,324.7 41.7,344.9 41.0,365.5 41.5,398.8 40.1,398.8" fill="#262626"/><polygon points="51.5,324.7 76.7,324.7 72.6,330.7 69.8,335.3 64.3,335.3 63.4,330.2 52.3,329.5" fill="#7c7c7c"/><polygon points="64.3,328.9 73.5,328.4 71.2,333.4 65.7,334.3" fill="#b4b4b4"/><polygon points="49.7,330.7 63.4,330.0 64.9,335.7 49.1,336.6" fill="#262626"/><polygon points="49.7,336.6 64.9,335.7 66.3,340.7 50.6,340.7" fill="#383838"/><polygon points="57.5,340.7 67.1,339.8 67.5,345.9 58.9,345.9" fill="#5c5c5c"/><polygon points="61.6,342.6 66.2,342.3 66.3,349.4 62.5,348.5" fill="#2a2a2a"/><polygon points="76.4,324.7 82.6,324.7 82.6,349.9 68.2,343.2 67.5,340.1" fill="#323232"/><polygon points="68.2,343.2 82.6,349.9 82.6,398.8 72.1,398.8 71.6,371.0 74.4,362.0 69.4,352.2" fill="#1c1c1c"/><polygon points="73.0,361.8 82.2,363.7 82.2,390.2 73.5,390.2" fill="#262626"/><polygon points="58.9,347.6 67.5,345.9 69.4,353.1 63.4,354.0 62.5,362.0" fill="#2e2e2e"/></g>
<rect x="40.6" y="324.9" width="41.6" height="73.5" filter="url(#nz)" opacity=".42"/>
<g filter="url(#bl2)"><path d="M56 370Q59 365 61 362L60.5 383H74Q76 390 75 399H61Q57 392 54.5 386Q54 378 56 370Z" fill="#141414" opacity=".9"/><path d="M67.2 352.2C69.5 352.2 71.6 356 72.8 361C74 366 74.6 374 74 383H60.5C60 375 60.6 367 62 361.5C63.2 356.5 65 352.2 67.2 352.2Z" fill="#0b0b0b"/></g></g>
<text x="57" y="387.6" font-family="Liberation Serif" font-size="5.6" font-weight="bold" fill="#b5822c" textLength="9.2" lengthAdjust="spacingAndGlyphs">Erebos</text>
<text x="57.2" y="392.8" font-family="Liberation Serif" font-size="2.8" font-weight="bold" fill="#8f6c2c" textLength="8.8" lengthAdjust="spacingAndGlyphs">Pesta Kommer</text>
</svg><div class="bar" style="left:92.5px;top:57px"></div><div class="bar" style="left:101px;top:66.5px"></div><div class="bar" style="left:117px;top:80px"></div><div class="bar" style="left:140px;top:57px"></div><div class="bar" style="left:179px;top:66.5px"></div><div class="bar" style="left:225.5px;top:80px"></div></div>
<div id="status"><span class="st" style="left:1px;font-weight:bold;letter-spacing:-.16px;">Playing</span><span class="st" style="left:38px;">16 bits</span><span class="st" style="left:70.5px;">stereo</span><span class="st" style="left:101.5px;">48000 Hz</span><span class="st" style="left:144px;">tracks: 7</span><span class="st" style="left:183.5px;">total time: 33:09</span><span class="st" style="left:250px;">114 kbps</span><span class="st" style="left:291.3px;">2:32/2:52</span><i class="ss" style="left:33px"></i><i class="ss" style="left:66px"></i><i class="ss" style="left:96px"></i><i class="ss" style="left:139px"></i><i class="ss" style="left:179px"></i><i class="ss" style="left:245px"></i><i class="ss" style="left:286px"></i></div>
</body></html>
